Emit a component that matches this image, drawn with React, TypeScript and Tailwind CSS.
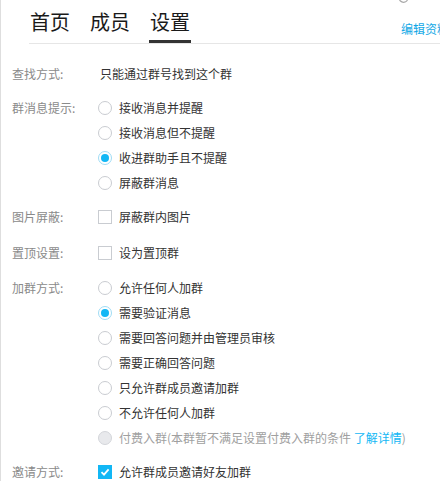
const font = { fontFamily: '"Noto Sans CJK SC", "Noto Sans", sans-serif' };

type Opt = { text: string; checked?: boolean; disabled?: boolean; link?: string };

const Radio = ({ checked, disabled }: { checked?: boolean; disabled?: boolean }) => (
  <span
    className={`w-[14px] h-[14px] rounded-full border flex items-center justify-center shrink-0 ${
      disabled ? 'bg-[#e8e9ec] border-[#d3d5da]' : checked ? 'bg-white border-[#9fdcf5]' : 'bg-white border-[#c9ccd1]'
    }`}
  >
    {checked && <span className="w-[8px] h-[8px] rounded-full bg-[#12b7f5]" />}
  </span>
);

const Checkbox = ({ checked }: { checked?: boolean }) => (
  <span
    className={`w-[14px] h-[14px] border flex items-center justify-center shrink-0 ${
      checked ? 'bg-[#12b7f5] border-[#12b7f5]' : 'bg-white border-[#c9ccd1]'
    }`}
  >
    {checked && (
      <svg width="10" height="10" viewBox="0 0 10 10">
        <path d="M1.5 5.2 L4 7.6 L8.6 2.4" fill="none" stroke="white" strokeWidth="1.8" />
      </svg>
    )}
  </span>
);

const Section = ({
  label,
  kind,
  options,
  className = '',
}: {
  label: string;
  kind: 'text' | 'radio' | 'check';
  options: Opt[];
  className?: string;
}) => (
  <div className={`flex ${className}`}>
    <div className="w-[86px] h-[25px] flex items-center text-[#8a8a8a] shrink-0">{label}</div>
    <div className="flex flex-col">
      {options.map((o) => (
        <div key={o.text} className="h-[25px] flex items-center gap-[7px]">
          {kind === 'radio' && <Radio checked={o.checked} disabled={o.disabled} />}
          {kind === 'check' && <Checkbox checked={o.checked} />}
          <span className={`${o.disabled ? 'text-[#a0a0a0]' : 'text-[#333]'} whitespace-nowrap ${kind === 'text' ? 'pl-[2px]' : ''}`}>
            {o.text}
            {o.link && (
              <>
                {' '}
                <span className="text-[#12b7f5]">{o.link}</span>)
              </>
            )}
          </span>
        </div>
      ))}
    </div>
  </div>
);

export default function App() {
  return (
    <div className="w-[440px] h-[481px] overflow-hidden bg-white border-l border-[#dedede] relative text-[12px]" style={font}>
      <svg className="absolute left-[397px] top-[-6px]" width="11" height="10" viewBox="0 0 11 10">
        <circle cx="5.5" cy="4" r="4.3" fill="none" stroke="#a8a8a8" strokeWidth="1.2" />
      </svg>
      <div className="flex items-end ml-[28px] border-b border-[#e6e6e6] h-[44px]">
        <div className="flex gap-[18px] text-[20px] text-[#1a1a1a] leading-none">
          <div className="pt-[2px] pb-[10px] px-[1px]">首页</div>
          <div className="pt-[2px] pb-[10px] px-[1px]">成员</div>
          <div className="pt-[2px] pb-[8px] px-[1px] border-b-[3px] border-[#333]">设置</div>
        </div>
        <div className="ml-auto mr-[-9px] mb-[5px] text-[12px] text-[#12a8e6] whitespace-nowrap">编辑资料</div>
      </div>
      <div className="pl-[11px] pt-[17px]">
        <Section label="查找方式:" kind="text" options={[{ text: '只能通过群号找到这个群' }]} />
        <Section
          label="群消息提示:"
          kind="radio"
          className="mt-[9px]"
          options={[
            { text: '接收消息并提醒' },
            { text: '接收消息但不提醒' },
            { text: '收进群助手且不提醒', checked: true },
            { text: '屏蔽群消息' },
          ]}
        />
        <Section label="图片屏蔽:" kind="check" className="mt-[9px]" options={[{ text: '屏蔽群内图片' }]} />
        <Section label="置顶设置:" kind="check" className="mt-[11px]" options={[{ text: '设为置顶群' }]} />
        <Section
          label="加群方式:"
          kind="radio"
          className="mt-[10px]"
          options={[
            { text: '允许任何人加群' },
            { text: '需要验证消息', checked: true },
            { text: '需要回答问题并由管理员审核' },
            { text: '需要正确回答问题' },
            { text: '只允许群成员邀请加群' },
            { text: '不允许任何人加群' },
            { text: '付费入群(本群暂不满足设置付费入群的条件', disabled: true, link: '了解详情' },
          ]}
        />
        <Section label="邀请方式:" kind="check" className="mt-[9px]" options={[{ text: '允许群成员邀请好友加群', checked: true }]} />
      </div>
    </div>
  );
}
